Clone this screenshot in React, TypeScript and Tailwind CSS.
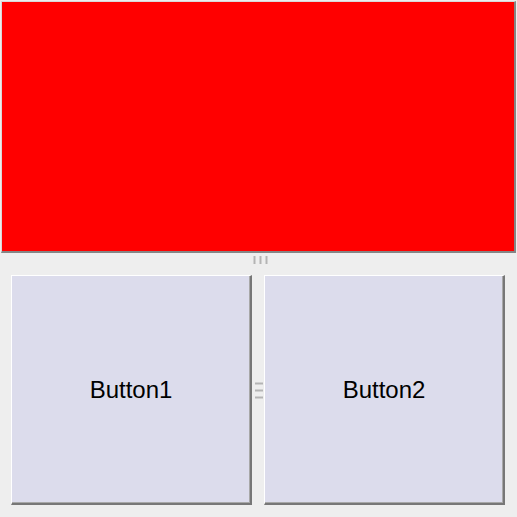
import React from "react";

const VBar = () => (
  <div className="w-[3px] h-[8px] bg-[linear-gradient(to_right,#e0e0e0,#b4b4b4,#e0e0e0)]" />
);
const HBar = () => (
  <div className="w-[8px] h-[3px] bg-[linear-gradient(to_bottom,#e0e0e0,#b4b4b4,#e0e0e0)]" />
);

const Btn = ({ label }: { label: string }) => (
  <div className="w-[241px] h-[230px] bg-[#dcdcec] border-t border-l border-t-white border-l-white border-r-2 border-b-2 border-r-[#777777] border-b-[#777777] shadow-[inset_-1px_-1px_0_#a8a8a8] flex items-center justify-center">
    <span className="text-[24px] text-black leading-none" style={{ fontFamily: '"Liberation Sans", Arial, sans-serif' }}>
      {label}
    </span>
  </div>
);

export default function App() {
  return (
    <div className="w-[517px] h-[517px] bg-[#eeeeee] flex flex-col">
      <div className="ml-[1px] mt-[1px] w-[515px] h-[252px] border-t border-l border-t-[#d8d8d8] border-l-[#d8d8d8] border-r-2 border-b-2 border-r-[#858585] border-b-[#858585] bg-[#ff0000]" />
      <div className="h-[22px] flex justify-center pt-[3px] pl-[3px] gap-[3px]">
        <VBar />
        <VBar />
        <VBar />
      </div>
      <div className="flex pl-[11px] h-[230px]">
        <Btn label="Button1" />
        <div className="w-[12px] flex flex-col items-center justify-center gap-[4px] pl-[2px]">
          <HBar />
          <HBar />
          <HBar />
        </div>
        <Btn label="Button2" />
      </div>
    </div>
  );
}
